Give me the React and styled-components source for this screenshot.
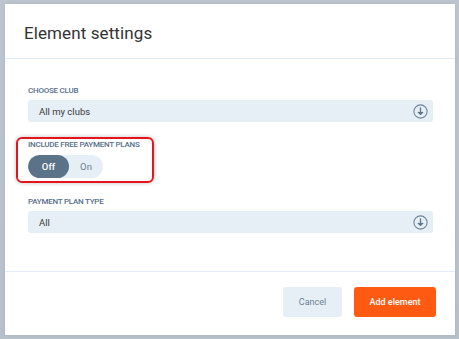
import React from "react";
import styled, { createGlobalStyle } from "styled-components";

const Global = createGlobalStyle`
  html, body { margin: 0; padding: 0; }
  body {
    background: #b9c3cc;
    font-family: Roboto, "Noto Sans", Arial, sans-serif;
    width: 459px;
    height: 339px;
    overflow: hidden;
  }
`;

const Backdrop = styled.div`
  width: 459px;
  height: 339px;
  padding: 4px 4px 4px 5px;
  box-sizing: border-box;
  background: linear-gradient(180deg, #bcc5ce 0%, #b7c1ca 100%);
`;

const Modal = styled.div`
  width: 450px;
  height: 331px;
  background: #fff;
  display: flex;
  flex-direction: column;
  box-shadow: 0 0 3px rgba(0, 0, 0, 0.08);
`;

const Header = styled.div`
  height: 54px;
  display: flex;
  align-items: center;
  padding-left: 19px;
  border-bottom: 1px solid #e3edf7;
`;

const Title = styled.h1`
  margin: 0;
  font-size: 17px;
  font-weight: 400;
  color: #333;
  letter-spacing: 0.1px;
  padding-top: 3px;
`;

const Body = styled.div`
  flex: 1;
  padding: 27px 22px 0 23px;
  display: flex;
  flex-direction: column;
  border-bottom: 1px solid #e3edf7;
`;

const Field = styled.div`
  position: relative;
  display: flex;
  flex-direction: column;
  align-items: ${(p) => (p.$inline ? "flex-start" : "stretch")};
  margin-top: ${(p) => p.$top || 0}px;
`;

const Label = styled.label`
  display: block;
  font-size: 8px;
  line-height: 10px;
  font-weight: 500;
  color: #56708a;
  text-transform: uppercase;
  letter-spacing: -0.25px;
  margin-bottom: ${(p) => p.$gap || 4}px;
`;

const Select = styled.div`
  height: 22px;
  background: #e6eef6;
  border-radius: 3px;
  display: flex;
  align-items: center;
  justify-content: space-between;
  padding: 0 5px 0 11px;
  font-size: 9.5px;
  color: #3a3a3a;
`;

const Toggle = styled.div`
  display: flex;
  width: 75px;
  height: 23px;
  border-radius: 12px;
  background: #e6eef6;
  overflow: hidden;
`;

const ToggleOption = styled.div`
  width: ${(p) => p.$w}px;
  display: flex;
  align-items: center;
  justify-content: center;
  font-size: 9.5px;
  font-weight: ${(p) => (p.$active ? 500 : 400)};
  color: ${(p) => (p.$active ? "#fff" : "#6b7f92")};
  background: ${(p) => (p.$active ? "#5a7389" : "transparent")};
  border-radius: 12px;
`;

const Highlight = styled.div`
  position: absolute;
  left: -12px;
  top: -3px;
  width: 138px;
  height: 46px;
  box-sizing: border-box;
  border: 2px solid #e5141c;
  border-radius: 6px;
  box-shadow: 0 0 4px rgba(0, 0, 0, 0.25);
  pointer-events: none;
`;

const Footer = styled.div`
  height: 63px;
  display: flex;
  justify-content: flex-end;
  align-items: flex-start;
  gap: 12px;
  padding: 15px 19px 0 0;
  box-sizing: border-box;
`;

const Button = styled.button`
  height: 30px;
  width: ${(p) => p.$w}px;
  border: none;
  border-radius: 3px;
  font-family: Roboto, Arial, sans-serif;
  font-size: 9px;
  font-weight: ${(p) => (p.$primary ? 500 : 400)};
  background: ${(p) => (p.$primary ? "#ff5a12" : "#e6eef6")};
  color: ${(p) => (p.$primary ? "#fff" : "#6b7f92")};
  padding: 0;
  cursor: pointer;
`;

const ArrowIcon = () => (
  <svg width="15" height="15" viewBox="0 0 15 15" fill="none">
    <circle cx="7.5" cy="7.5" r="6.6" stroke="#6f8499" strokeWidth="1.1" />
    <path d="M7.5 3.8 V10.2" stroke="#5f7489" strokeWidth="1.3" strokeLinecap="round" />
    <path d="M5 8 L7.5 10.4 L10 8" stroke="#5f7489" strokeWidth="1.3" fill="#5f7489" strokeLinejoin="round" />
  </svg>
);

export default function App() {
  return (
    <>
      <Global />
      <Backdrop>
        <Modal>
          <Header>
            <Title>Element settings</Title>
          </Header>
          <Body>
            <Field>
              <Label>Choose club</Label>
              <Select>
                <span>All my clubs</span>
                <ArrowIcon />
              </Select>
            </Field>
            <Field $inline $top={18}>
              <Label $gap={5}>Include free payment plans</Label>
              <Toggle>
                <ToggleOption $active $w={41}>Off</ToggleOption>
                <ToggleOption $w={34}>On</ToggleOption>
              </Toggle>
              <Highlight />
            </Field>
            <Field $top={19}>
              <Label>Payment plan type</Label>
              <Select>
                <span>All</span>
                <ArrowIcon />
              </Select>
            </Field>
          </Body>
          <Footer>
            <Button $w={59}>Cancel</Button>
            <Button $primary $w={82}>Add element</Button>
          </Footer>
        </Modal>
      </Backdrop>
    </>
  );
}
